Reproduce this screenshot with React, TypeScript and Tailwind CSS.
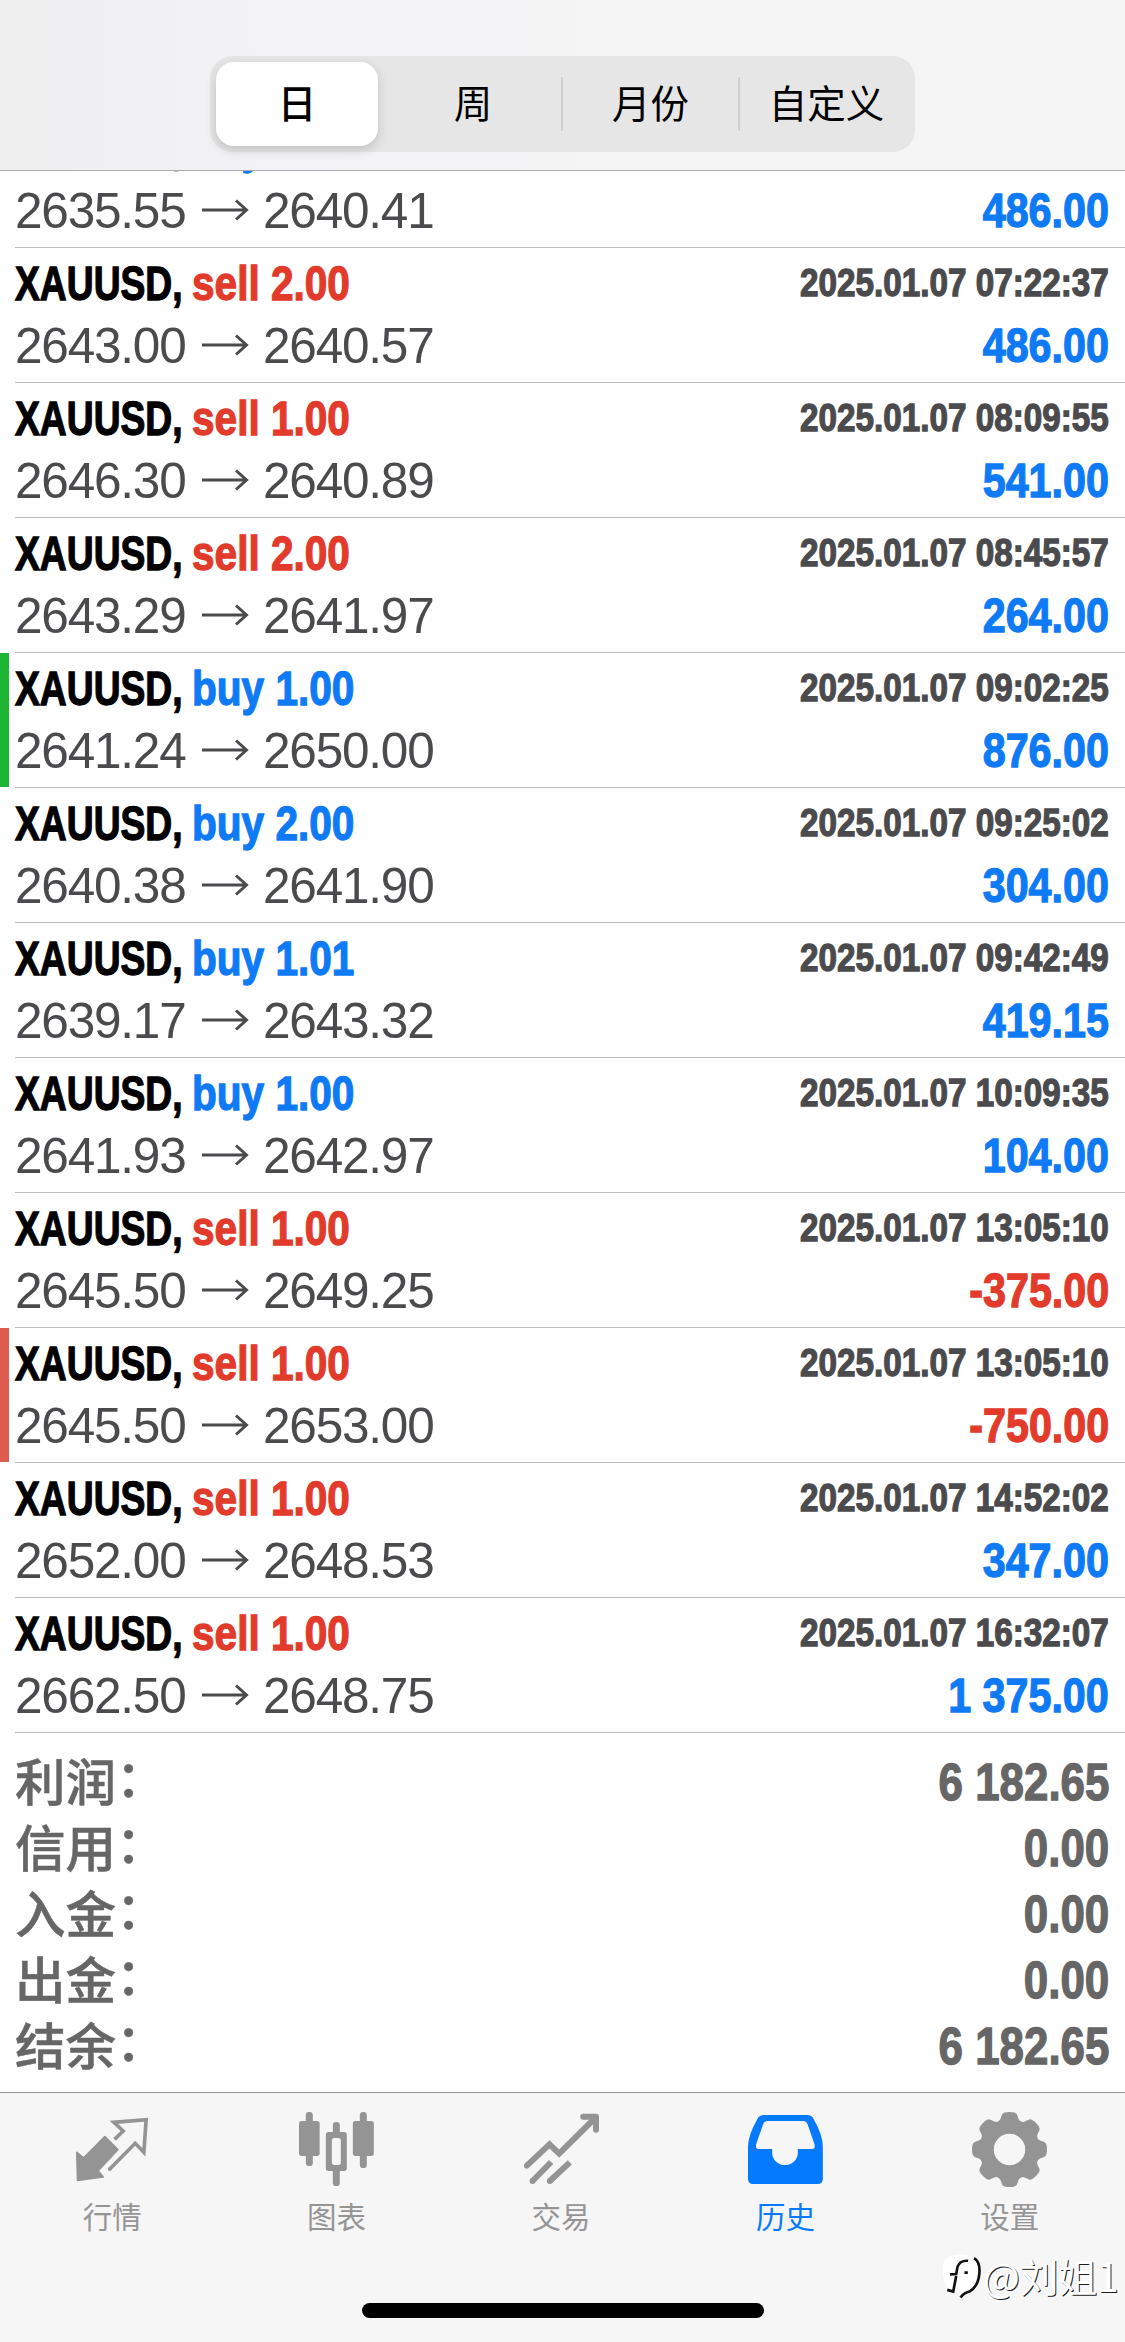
import React from "react";

type Trade = {
  side: "buy" | "sell";
  volume: string;
  time: string;
  open: string;
  close: string;
  profit: string;
  mark?: "green" | "red";
};

const trades: Trade[] = [
  { side: "sell", volume: "2.00", time: "2025.01.07 07:22:37", open: "2643.00", close: "2640.57", profit: "486.00" },
  { side: "sell", volume: "1.00", time: "2025.01.07 08:09:55", open: "2646.30", close: "2640.89", profit: "541.00" },
  { side: "sell", volume: "2.00", time: "2025.01.07 08:45:57", open: "2643.29", close: "2641.97", profit: "264.00" },
  { side: "buy", volume: "1.00", time: "2025.01.07 09:02:25", open: "2641.24", close: "2650.00", profit: "876.00", mark: "green" },
  { side: "buy", volume: "2.00", time: "2025.01.07 09:25:02", open: "2640.38", close: "2641.90", profit: "304.00" },
  { side: "buy", volume: "1.01", time: "2025.01.07 09:42:49", open: "2639.17", close: "2643.32", profit: "419.15" },
  { side: "buy", volume: "1.00", time: "2025.01.07 10:09:35", open: "2641.93", close: "2642.97", profit: "104.00" },
  { side: "sell", volume: "1.00", time: "2025.01.07 13:05:10", open: "2645.50", close: "2649.25", profit: "-375.00" },
  { side: "sell", volume: "1.00", time: "2025.01.07 13:05:10", open: "2645.50", close: "2653.00", profit: "-750.00", mark: "red" },
  { side: "sell", volume: "1.00", time: "2025.01.07 14:52:02", open: "2652.00", close: "2648.53", profit: "347.00" },
  { side: "sell", volume: "1.00", time: "2025.01.07 16:32:07", open: "2662.50", close: "2648.75", profit: "1 375.00" },
];

const summary = [
  ["利润", "6 182.65"],
  ["信用", "0.00"],
  ["入金", "0.00"],
  ["出金", "0.00"],
  ["结余", "6 182.65"],
];

// Bold condensed lettering: a bold grotesque squeezed horizontally, with a thin outline to keep the stems heavy.
const condensed = "block whitespace-pre font-['Liberation_Sans',sans-serif] font-bold [-webkit-text-stroke:1.3px_currentColor]";
const cjk = "font-['Noto_Sans_CJK_SC',sans-serif]";

function Title({ side, volume }: { side: "buy" | "sell"; volume: string }) {
  return (
    <div className="flex h-[60px] text-[49px] leading-[60px]">
      <div className="w-[177px]">
        <span className={`${condensed} w-max origin-left scale-x-[0.76] text-black`}>XAUUSD,</span>
      </div>
      <span className={`${condensed} origin-left scale-x-[0.828] ${side === "sell" ? "text-[#e23a2b]" : "text-[#0f7af5]"}`}>
        {side} {volume}
      </span>
    </div>
  );
}

function Prices({ open, close, profit }: { open: string; close: string; profit: string }) {
  return (
    <div className="flex h-[60px] items-center justify-between whitespace-pre">
      <div className="flex items-center font-['Liberation_Sans',sans-serif] text-[49.500px] leading-[60px] tracking-[-1.200px] text-[#4b4b4e]">
        <span className="w-[187px]">{open}</span>
        <svg viewBox="0 0 61 24" className="mb-[2px] h-6 w-[61px]" fill="none" stroke="#4b4b4e" strokeWidth="3" aria-label="→">
          <path d="M0 12H44M34 2.500L44.500 12L34 21.500" />
        </svg>
        <span>{close}</span>
      </div>
      <span className={`${condensed} mb-[2px] origin-right scale-x-[0.842] text-[49px] leading-[60px] ${profit.startsWith("-") ? "text-[#e23a2b]" : "text-[#0f7af5]"}`}>
        {profit}
      </span>
    </div>
  );
}

function TradeRow({ t }: { t: Trade }) {
  return (
    <div className="relative h-[135px] pl-[15px]">
      {t.mark && (
        <div className={`absolute left-0 top-0 h-[134px] w-[9px] ${t.mark === "green" ? "bg-[#1db534]" : "bg-[#e05c51]"}`} />
      )}
      <div className="h-full border-b border-[#bdbdc1] pr-[16px] pt-[5px]">
        <div className="flex h-[60px] items-center justify-between whitespace-pre">
          <Title side={t.side} volume={t.volume} />
          <span className={`${condensed} mb-[2px] origin-right scale-x-[0.842] text-[39.500px] leading-[60px] text-[#4b4b4e]`}>{t.time}</span>
        </div>
        <div className="mt-[3px]">
          <Prices open={t.open} close={t.close} profit={t.profit} />
        </div>
      </div>
    </div>
  );
}

function QuotesIcon() {
  return (
    <svg viewBox="72.5 66 225 225" className="size-[75px]">
      <path d="M78 187 L98 204 L162 140 L201 179 L142 242 L157 261 L80 271 Z" fill="#949494" stroke="#949494" strokeWidth="5" strokeLinejoin="round" />
      <path d="M191 148 L217 123 L189 97 L286 89 L279 187 L253 160 L177 237" fill="none" stroke="#949494" strokeWidth="11" />
      <circle cx="177" cy="237" r="6" fill="#949494" />
    </svg>
  );
}

function ChartIcon() {
  return (
    <svg viewBox="747.5 66 225 225" className="size-[75px]" fill="#949494">
      <rect x="768" y="66" width="21" height="162" rx="10" />
      <rect x="747.5" y="93" width="62" height="105" rx="8" />
      <rect x="930" y="66" width="21" height="168" rx="10" />
      <rect x="909" y="93" width="63" height="105" rx="8" />
      <rect x="849" y="96" width="21" height="46" rx="10" />
      <rect x="849" y="230" width="21" height="58" rx="10" />
      <path fillRule="evenodd" d="M836 126h47a8 8 0 0 1 8 8v101a8 8 0 0 1-8 8h-47a8 8 0 0 1-8-8V134a8 8 0 0 1 8-8zM854 144a8 8 0 0 0-8 8v65a8 8 0 0 0 8 8h11a8 8 0 0 0 8-8v-65a8 8 0 0 0-8-8z" />
    </svg>
  );
}

function TradeIcon() {
  return (
    <svg viewBox="72.5 66 225 225" className="size-[75px]" fill="none" stroke="#949494">
      <path d="M81 227 L149 163 L178 191 L286 84" strokeWidth="18" strokeLinecap="round" />
      <path d="M250 80.500 H288.500 V119" strokeWidth="18" strokeLinecap="round" strokeLinejoin="round" />
      <path d="M98 273 L154 216 M150 273 L210 217" strokeWidth="18" />
      <circle cx="98" cy="273" r="9" fill="#949494" stroke="none" />
      <circle cx="150" cy="273" r="9" fill="#949494" stroke="none" />
    </svg>
  );
}

function HistoryIcon() {
  return (
    <svg viewBox="747.5 66 225 225" className="size-[75px]">
      <path
        fill="#057aff"
        fillRule="evenodd"
        d="M795 75 H926 Q938 75 944 86 Q972 135 972 170 V266 Q972 282 956 282 H763 Q747.500 282 747.500 266 V170 Q748 135 776 86 Q782 75 795 75 Z M806 93 Q797 93 793 102 L772 163 Q769 177 779 177 H820 V188 A38.500 37 0 0 0 897 188 V177 H940 Q950 177 947 163 L926 102 Q922 93 913 93 Z"
      />
    </svg>
  );
}

function SettingsIcon() {
  return (
    <svg viewBox="222.5 66 225 225" className="size-[75px]">
      <g fill="#949494">
        {[0, 45, 90, 135, 180, 225, 270, 315].map((a) => (
          <path
            key={a}
            transform={`rotate(${a} 335 178.500)`}
            d="M335 66 Q353 66 357 73 Q360 80 362 87 Q366 95 374 97 L365 120 H305 L296 97 Q304 95 308 87 Q310 80 313 73 Q317 66 335 66 Z"
          />
        ))}
      </g>
      <circle cx="335" cy="178.500" r="64" fill="none" stroke="#949494" strokeWidth="36" />
      <circle cx="335" cy="178.500" r="47" fill="#f6f6f6" />
    </svg>
  );
}

const tabs = [
  { label: "行情", icon: <QuotesIcon /> },
  { label: "图表", icon: <ChartIcon /> },
  { label: "交易", icon: <TradeIcon /> },
  { label: "历史", icon: <HistoryIcon />, active: true },
  { label: "设置", icon: <SettingsIcon /> },
];

export default function App() {
  return (
    <div className="relative flex h-[2342px] w-[1125px] flex-col overflow-hidden bg-white">
      <header className="relative z-10 flex h-[171px] shrink-0 justify-center border-b border-[#acacae] bg-linear-to-r from-[#efeff0] via-[#f3f3f7] via-25% to-[#f5f5f5] to-60% pt-14">
        <div className={`${cjk} flex h-24 w-[705px] rounded-[22px] bg-[#e6e6e7] text-[38.500px] leading-[79px] text-black`}>
          <div className="ml-1.5 mt-1.5 h-[84px] w-[162px] rounded-[18px] bg-white text-center font-medium shadow-[0_4px_12px_rgba(0,0,0,0.16)]">日</div>
          <div className="mt-1.5 flex-1 pl-[7px] text-center">周</div>
          <div className="mt-[21px] h-[54px] w-0.5 bg-[#cfcfd1]" />
          <div className="mt-1.5 w-[175px] text-center">月份</div>
          <div className="mt-[21px] h-[54px] w-0.5 bg-[#cfcfd1]" />
          <div className="mt-1.5 w-[175px] pr-[2px] text-center">自定义</div>
        </div>
      </header>

      <main className="shrink-0">
        <div className="h-[77px] overflow-hidden pl-[15px]">
          <div className="-mt-[58px] h-[135px] border-b border-[#bdbdc1] pr-[16px] pt-[3px]">
            <Title side="buy" volume="2.00" />
            <div className="mt-[5px]">
              <Prices open="2635.55" close="2640.41" profit="486.00" />
            </div>
          </div>
        </div>
        {trades.map((t, i) => (
          <TradeRow key={i} t={t} />
        ))}
      </main>

      <section className="h-[359px] shrink-0 pl-[15px] pr-[16px] pt-4 text-[#666666]">
        {summary.map(([label, value]) => (
          <div key={label} className="flex h-[66px] items-center justify-between whitespace-pre">
            <div className={`${cjk} -mt-[7px] text-[50.500px] font-medium leading-[66px] [-webkit-text-stroke:0.5px_currentColor]`}>
              {label}
              <span className="inline-block -translate-y-[4px]">：</span>
            </div>
            <span className={`${condensed} origin-right scale-x-[0.844] text-[52px] leading-[66px]`}>{value}</span>
          </div>
        ))}
      </section>

      <nav className="relative flex h-[250px] shrink-0 flex-col items-center border-t border-[#929295] bg-[#f6f6f6]">
        <div className="flex w-full pr-[3px] pt-[19px]">
          {tabs.map((tab) => (
            <div key={tab.label} className="flex flex-1 flex-col items-center">
              {tab.icon}
              <span className={`${cjk} mt-[6px] text-[29.500px] leading-[44px] ${tab.active ? "text-[#057aff]" : "text-[#959595]"}`}>
                {tab.label}
              </span>
            </div>
          ))}
        </div>
        <div className="mt-[66px] h-[15px] w-[402px] rounded-full bg-black" />

        <div className="absolute left-[940px] top-[157px] flex items-center">
          <svg viewBox="120 500 130 150" className="h-[50px] w-[43px]">
            <path d="M128 560 Q126 514 180 514 Q237 514 237 568 Q237 620 185 624 Q128 626 128 560Z" fill="#fff" />
            <path d="M223 524 Q242 535 239 570 Q236 608 211 624 Q190 630 182 643" fill="none" stroke="#111" strokeWidth="8" />
            <path d="M205 532 Q180 530 173 550 L169 572 L150 573 M169 578 L160 625 L142 620 M194 568 H204" fill="none" stroke="#111" strokeWidth="8" />
          </svg>
          <span className={`${cjk} whitespace-nowrap text-[39px] font-normal leading-[48px] tracking-[-0.3px] text-white [text-shadow:1px_1px_0.5px_rgba(0,0,0,0.9)]`}>
            @刘姐1
          </span>
        </div>
      </nav>
    </div>
  );
}
